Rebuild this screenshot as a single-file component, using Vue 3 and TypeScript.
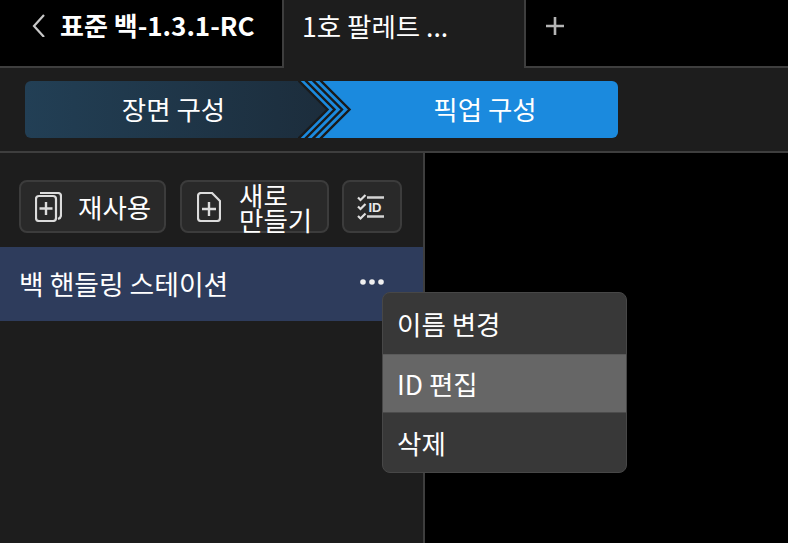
<script setup lang="ts">
const menuItems = [
  { label: '이름 변경', active: false },
  { label: 'ID 편집', active: true },
  { label: '삭제', active: false },
]

// top x of each dark stripe in the step divider
const stripes = [1, 8, 15.5, 23]
</script>

<template>
  <div class="page">
    <header class="tabs">
      <div class="tab-back">
        <svg class="back-icon" width="16" height="24" viewBox="0 0 16 24" fill="none">
          <path d="M13 2 L3 13 L13 24" stroke="#c8c8c8" stroke-width="2.2" />
        </svg>
        <span class="back-title">표준 백-1.3.1-RC</span>
      </div>
      <div class="tab-current">1호 팔레트 ...</div>
      <div class="tab-add">
        <svg width="20" height="20" viewBox="0 0 20 20" fill="none">
          <path d="M10 1 V19 M1 10 H19" stroke="#b4b4b4" stroke-width="2.6" />
        </svg>
      </div>
    </header>

    <div class="steps">
      <div class="stepper">
        <div class="step step-first">장면 구성</div>
        <div class="step step-second">픽업 구성</div>
        <svg class="chevrons" width="58" height="57" viewBox="0 0 58 57" fill="none">
          <path
            v-for="x in stripes"
            :key="x"
            :d="`M${x - 1} -1 L${x + 28.5} 28.5 L${x - 1} 58`"
            stroke="#1a1a1a"
            stroke-width="2.4"
          />
        </svg>
      </div>
    </div>

    <div class="body">
      <aside class="side">
        <div class="tools">
          <button class="tool tool-reuse">
            <svg width="27" height="30" viewBox="0 0 27 30" fill="none" stroke="#dcdcdc" stroke-width="2.2">
              <rect x="1" y="4" width="20" height="25" rx="3" />
              <path d="M5 1 H23 Q26 1 26 4 V23 Q26 26 23 27" />
              <path d="M11 10 V23 M4.500 16.500 H17.500" stroke-width="2.400" />
            </svg>
            <span>재사용</span>
          </button>
          <button class="tool tool-new">
            <svg width="24" height="30" viewBox="0 0 24 30" fill="none" stroke="#dcdcdc" stroke-width="2.2">
              <path d="M4 1 H15 L23 9 V26 Q23 29 20 29 H4 Q1 29 1 26 V4 Q1 1 4 1 Z" />
              <path d="M12 10 V24 M5 17 H19" stroke-width="2.400" />
            </svg>
            <span class="tool-label-wrap">새로<br />만들기</span>
          </button>
          <button class="tool tool-id">
            <svg width="28" height="28" viewBox="0 0 28 28" fill="none">
              <path d="M1 4.500 L3.500 7 L8.500 2 M1 13.500 L3.500 16 L8.500 11 M1 23 L3.500 25.500 L8.500 20.500" stroke="#e0e0e0" stroke-width="2.200" />
              <path d="M10 4.500 H27 M10 23.500 H27" stroke="#d4d4d4" stroke-width="2.600" />
              <text x="11.500" y="19" class="id-mark">ID</text>
            </svg>
          </button>
        </div>
        <div class="row">
          <span class="row-name">백 핸들링 스테이션</span>
          <svg class="row-more" width="24" height="6" viewBox="0 0 24 6" fill="#f0f0f0">
            <circle cx="3" cy="3" r="2.800" />
            <circle cx="12" cy="3" r="2.800" />
            <circle cx="21" cy="3" r="2.800" />
          </svg>
        </div>
      </aside>
      <main class="canvas"></main>
    </div>

    <ul class="menu">
      <li v-for="item in menuItems" :key="item.label" class="menu-item" :class="{ active: item.active }">
        {{ item.label }}
      </li>
    </ul>
  </div>
</template>

<style scoped>
.page {
  position: relative;
  width: 788px;
  height: 543px;
  overflow: hidden;
  display: flex;
  flex-direction: column;
  background: #1d1d1d;
  color: #fff;
  font-family: "Noto Sans CJK KR", "Noto Sans", sans-serif;
  font-size: 26.5px;
  font-weight: 400;
}

.tabs {
  display: flex;
  height: 68px;
  flex: none;
}

.tab-back {
  width: 284px;
  box-sizing: border-box;
  display: flex;
  align-items: flex-start;
  padding: 13px 0 0 31px;
  background: #000;
  border-right: 2px solid #3e3e3e;
  border-bottom: 2px solid #3e3e3e;
}

.back-icon {
  flex: none;
}

.back-title {
  margin-left: 13px;
  font-size: 26px;
  font-weight: 700;
  line-height: 24px;
}

.tab-current {
  width: 240px;
  box-sizing: border-box;
  padding: 11px 0 0 18px;
  line-height: 30px;
}

.tab-add {
  flex: 1;
  box-sizing: border-box;
  background: #000;
  border-left: 2px solid #3e3e3e;
  border-bottom: 2px solid #3e3e3e;
  padding: 16px 0 0 19px;
}

.tab-add svg {
  display: block;
}

.steps {
  height: 85px;
  flex: none;
  box-sizing: border-box;
  padding: 13px 0 0 25px;
  border-bottom: 2px solid #3e3e3e;
}

.stepper {
  position: relative;
  width: 593px;
  height: 57px;
  display: flex;
}

.step {
  display: flex;
  align-items: center;
  justify-content: center;
  line-height: 1;
}

.step-first {
  position: relative;
  z-index: 1;
  width: 302px;
  padding-right: 5px;
  box-sizing: border-box;
  border-radius: 6px 0 0 6px;
  background: linear-gradient(90deg, #223f55, #1c2d3c);
  clip-path: polygon(0 0, 273px 0, 302px 50%, 273px 100%, 0 100%);
}

.step-second {
  flex: 1;
  margin-left: -29px;
  padding-left: 54px;
  border-radius: 0 6px 6px 0;
  background: #1b8ade;
}

.chevrons {
  position: absolute;
  z-index: 2;
  left: 273px;
  top: 0;
  overflow: hidden;
}

.body {
  flex: 1;
  display: flex;
  min-height: 0;
}

.side {
  width: 423px;
  flex: none;
  border-right: 2px solid #3e3e3e;
  padding-top: 27px;
}

.tools {
  display: flex;
  gap: 14px;
  padding-left: 19px;
}

.tool {
  height: 53px;
  box-sizing: border-box;
  display: flex;
  align-items: center;
  background: #292929;
  border: 2px solid #3c3c3c;
  border-radius: 8px;
  color: #fff;
  font: inherit;
  padding: 0;
}

.tool-reuse {
  width: 147px;
  padding-left: 14px;
  gap: 16px;
}

.tool-new {
  width: 149px;
  padding-left: 15px;
  gap: 18px;
}

.tool-label-wrap {
  line-height: 25px;
  text-align: left;
}

.tool-id {
  width: 60px;
  margin-left: -1px;
  padding-left: 13px;
}

.id-mark {
  font-family: "Liberation Sans", sans-serif;
  font-size: 13px;
  font-weight: 700;
  fill: #e8e8e8;
}

.row {
  margin-top: 14px;
  height: 74px;
  display: flex;
  align-items: center;
  justify-content: space-between;
  padding: 0 39px 0 19px;
  background: #2e3c5c;
}

.row-name {
  font-size: 26.8px;
  margin-top: -2px;
}

.row-more {
  margin-top: -4px;
}

.canvas {
  flex: 1;
  background: #000;
}

.menu {
  position: absolute;
  left: 382px;
  top: 292px;
  width: 245px;
  margin: 0;
  padding: 0;
  list-style: none;
  box-sizing: border-box;
  border: 1px solid #474747;
  border-radius: 8px;
  background: #383838;
  overflow: hidden;
}

.menu-item {
  height: 59px;
  box-sizing: border-box;
  display: flex;
  align-items: center;
  padding-left: 14px;
}

.menu-item:first-child {
  height: 61px;
}

.menu-item.active {
  background: #666;
  border-top: 1px solid #5a5a5a;
  border-bottom: 1px solid #4c4c4c;
}
</style>
